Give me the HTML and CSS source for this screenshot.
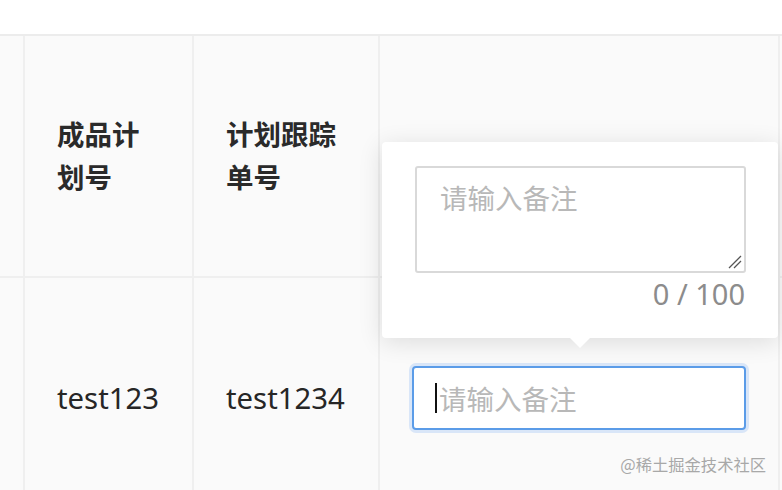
FILE: index.html
```html
<!DOCTYPE html>
<html lang="zh-CN">
<head>
<meta charset="utf-8">
<link rel="stylesheet" href="styles.css">
</head>
<body>
<div class="page">
  <div class="top"></div>
  <div class="table">
    <div class="row head">
      <div class="cell c0"></div>
      <div class="cell c1"><div class="htext">成品计<br>划号</div></div>
      <div class="cell c2"><div class="htext">计划跟踪<br>单号</div></div>
      <div class="cell c3"></div>
      <div class="cell c4"></div>
    </div>
    <div class="row body">
      <div class="cell c0"></div>
      <div class="cell c1"><span class="btext">test123</span></div>
      <div class="cell c2"><span class="btext">test1234</span></div>
      <div class="cell c3">
        <div class="input"><span class="caret"></span><span class="ph">请输入备注</span></div>
      </div>
      <div class="cell c4"></div>
    </div>
  </div>
  <div class="popover">
    <div class="textarea"><span class="ph">请输入备注</span>
      <svg class="grip" width="14" height="14" viewBox="0 0 14 14"><path d="M1 13 L13 1 M6 13 L13 6" stroke="#555" stroke-width="1.3" fill="none"/></svg>
    </div>
    <div class="count">0 / 100</div>
    <div class="arrow"></div>
  </div>
  <div class="mark">@稀土掘金技术社区</div>
</div>
</body>
</html>
```
FILE: styles.css
```css
html, body {
  margin: 0;
  padding: 0;
  background: #ffffff;
}
.page {
  position: relative;
  width: 782px;
  height: 490px;
  overflow: hidden;
  font-family: "Noto Sans", "Noto Sans CJK SC", sans-serif;
  color: #262626;
}
.top {
  height: 34px;
  border-bottom: 2px solid #ececec;
}
.table {
  background: #fafafa;
}
.row {
  display: flex;
}
.row.head {
  height: 240px;
  border-bottom: 2px solid #efefef;
}
.row.body {
  height: 240px;
}
.cell {
  box-sizing: border-box;
  border-right: 2px solid #efefef;
  display: flex;
  align-items: center;
  flex: none;
}
.c0 { width: 25px; }
.c1 { width: 169px; padding-left: 32px; }
.c2 { width: 186px; padding-left: 32px; }
.c3 { width: 400px; padding-left: 32px; }
.c4 { width: 10px; border-right: none; }
.htext {
  font-family: "Noto Sans CJK SC", sans-serif;
  font-weight: 700;
  font-size: 27.5px;
  line-height: 43px;
  color: #2a2a2a;
  margin-top: -2px;
}
.btext {
  font-size: 29.3px;
  color: #262626;
}
.input {
  box-sizing: border-box;
  width: 334px;
  height: 64px;
  background: #fff;
  border: 2px solid #5b9ce8;
  border-radius: 4px;
  box-shadow: 0 0 0 3px rgba(100, 160, 240, 0.22);
  display: flex;
  align-items: center;
  padding-left: 21px;
}
.caret {
  width: 2px;
  height: 30px;
  background: #111;
  margin-right: 2px;
}
.ph {
  font-family: "Noto Sans CJK SC", sans-serif;
  font-size: 27.5px;
  color: #b8b8b8;
}
.popover {
  position: absolute;
  left: 382px;
  top: 142px;
  width: 396px;
  height: 196px;
  box-sizing: border-box;
  background: #fff;
  border-radius: 4px;
  box-shadow: 0 4px 24px rgba(0, 0, 0, 0.12);
  padding: 24px 33px 0 33px;
}
.textarea {
  position: relative;
  box-sizing: border-box;
  width: 331px;
  height: 107px;
  border: 2px solid #d9d9d9;
  border-radius: 3px;
  padding: 9px 0 0 23px;
  line-height: 40px;
}
.grip {
  position: absolute;
  right: 2px;
  bottom: 2px;
}
.count {
  text-align: right;
  font-family: "Noto Sans", sans-serif;
  font-size: 29px;
  line-height: 36px;
  margin-top: 3px;
  color: #8c8c8c;
}
.arrow {
  position: absolute;
  left: 188px;
  bottom: -10px;
  width: 0;
  height: 0;
  border-left: 10px solid transparent;
  border-right: 10px solid transparent;
  border-top: 10px solid #fff;
}
.mark {
  position: absolute;
  right: 16px;
  top: 452px;
  font-family: "Noto Sans CJK SC", sans-serif;
  font-size: 16.3px;
  color: #a8a8a8;
}
```
